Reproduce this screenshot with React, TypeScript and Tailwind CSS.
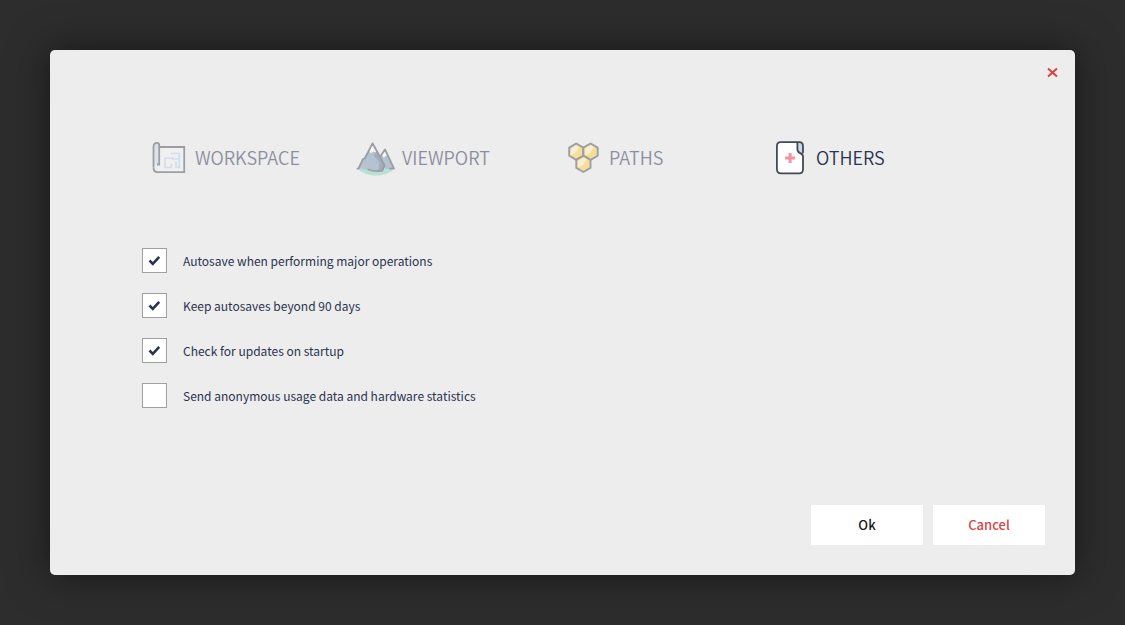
import { useState } from 'react';
import type { ReactNode } from 'react';

function BlueprintIcon() {
  return (
    <svg viewBox="0 0 42 42" className="size-[42px]" fill="none" aria-hidden="true">
      <path d="M10 10h26v24.500H10z" fill="#f4f4f4" />
      <path d="M5.500 30V10c0-2.600 1.300-4.200 3.300-4.200 1.500 0 2.400.8 2.400 2.400V27H8.500c-2 0-3 1.500-3 3z" fill="#c9d9e8" />
      <path
        d="M5.500 30V10c0-2.600 1.300-4.200 3.300-4.200 1.500 0 2.400.8 2.400 2.400V27.500H9M11.500 10h24.700v25.200H9.500c-2.700 0-4-1.800-4-5"
        stroke="#4b545e"
        strokeWidth="1.800"
      />
      <path
        d="M17 20.500V30.500h6.500v-4M16.500 21h8.500v2M22.500 16.500h8.800v5.500H26.500M31.300 22v8.500H28v-6"
        stroke="#b9d0e4"
        strokeWidth="1.700"
      />
    </svg>
  );
}

function MountainIcon() {
  return (
    <svg viewBox="0 0 42 42" className="size-[42px]" fill="none" aria-hidden="true">
      <path d="M3 32h36c-4 4-11 6.500-18 6.500S7 36 3 32z" fill="#82d7b5" />
      <path d="M25 21l5.500-8.500L39.500 32H30z" fill="#7d98b8" />
      <path d="M17.500 6.500L30 26l-2.500 8-14-1.500-11-1 6-10z" fill="#7d98b8" />
      <path d="M18.500 18l6 8-1 7.500 4.500.500 2.500-5.500L22 13z" fill="#5a7290" />
      <path d="M17.500 6.500L14 14l2 2.500 2-2 2.500 1L22 13z" fill="#fff" />
      <path d="M30 13l-3 5.500 2 2 2-2 2.500 1z" fill="#fff" />
      <path
        d="M2.500 31.700h1L8 22l1.800-.5L17.500 6.300 25 20l4.500 8.500-2.300 5c-4.200 1-10 .8-14-1M25 20l5-7.500 9 19.200h-4"
        stroke="#4b545e"
        strokeWidth="1.800"
        strokeLinejoin="round"
        strokeLinecap="round"
      />
    </svg>
  );
}

function HoneycombIcon() {
  return (
    <svg viewBox="-0.7 0 42 42" className="size-[42px]" fill="none" aria-hidden="true">
      <g fill="#ffd046" stroke="#4b545e" strokeWidth="1.900" strokeLinejoin="round">
        <path d="M13.500 6.500l7.100 4.100v8.200l-7.100 4.100-7-4.100v-8.200z" />
        <path d="M27.900 6.500l7.100 4.100v8.200l-7.100 4.100-7.300-4.100v-8.200z" />
        <path d="M20.700 18.800l7.100 4.100v8L20.700 35l-7.100-4.100v-8z" />
      </g>
      <g fill="#fff" fillOpacity=".65">
        <path d="M8 11.500l5.500-3.200 3 1.700-3 5.500-5.500 3z" />
        <path d="M22.400 11.500l5.500-3.200 3 1.700-3 5.500-5.500 3z" />
        <path d="M15.200 23.800l5.500-3.200 3 1.700-3 5.500-5.500 3z" />
      </g>
    </svg>
  );
}

function MedicalFileIcon() {
  return (
    <svg viewBox="-0.2 0 42 42" className="size-[42px]" fill="none" aria-hidden="true">
      <path
        d="M11.500 5.200h18.700c2.600 0 3.600 1.600 3.600 4v22.800c0 3-1 4.400-3.600 4.400H12c-3 0-4.300-1.300-4.300-4.400V9.400c0-2.800 1-4.200 3.800-4.200z"
        fill="#fff"
      />
      <path d="M28.200 5.400h2c2.500 0 3.600 1.600 3.600 4v7.600l-3.600-1.500c-1.600-.9-2-1.900-2-4z" fill="#c9d9e8" />
      <path
        d="M33.800 15.500V9.400c0-2.600-1-4.200-3.600-4.200H11.500c-2.800 0-3.800 1.400-3.800 4.200V32c0 3 1.200 4.400 4.300 4.400h18.200c2.600 0 3.600-1.400 3.600-4.400V19.700c0-1.900-.7-2.600-2.800-3.500-2-.9-2.800-2-2.800-4.200V5.400"
        stroke="#414a56"
        strokeWidth="1.800"
        strokeLinecap="round"
      />
      <path d="M19.400 16h3v3.500H26v3h-3.600v3.600h-3v-3.600h-3.500v-3h3.500z" fill="#f094a0" />
    </svg>
  );
}

const tabs: { name: string; icon: ReactNode }[] = [
  { name: 'WORKSPACE', icon: <BlueprintIcon /> },
  { name: 'VIEWPORT', icon: <MountainIcon /> },
  { name: 'PATHS', icon: <HoneycombIcon /> },
  { name: 'OTHERS', icon: <MedicalFileIcon /> },
];

const options = [
  { id: 'autosave', label: 'Autosave when performing major operations', checked: true },
  { id: 'keep', label: 'Keep autosaves beyond 90 days', checked: true },
  { id: 'updates', label: 'Check for updates on startup', checked: true },
  { id: 'usage', label: 'Send anonymous usage data and hardware statistics', checked: false },
];

function Option({ id, label, checked }: { id: string; label: string; checked: boolean }) {
  return (
    <div className="flex items-center gap-4">
      <span className="grid size-[25px] shrink-0 place-items-center">
        <input
          id={id}
          type="checkbox"
          defaultChecked={checked}
          className="peer col-start-1 row-start-1 size-[25px] appearance-none border border-[#a0a0a0] bg-white"
        />
        <svg
          viewBox="0 0 13 13"
          className="pointer-events-none invisible col-start-1 row-start-1 size-[13px] peer-checked:visible"
          fill="none"
          aria-hidden="true"
        >
          <path d="M1.500 6.500l3.300 3.300 6.400-6.900" stroke="#2c3350" strokeWidth="2.600" />
        </svg>
      </span>
      <label htmlFor={id} className="text-[12px] leading-5">
        {label}
      </label>
    </div>
  );
}

export default function App() {
  const [active, setActive] = useState('OTHERS');
  return (
    <div className="flex min-h-screen bg-[#2d2d2d] p-[50px] font-['Noto_Sans_CJK_SC',sans-serif] text-[#2c3350]">
      <main
        role="dialog"
        aria-label="Preferences"
        className="flex flex-1 flex-col rounded-[5px] bg-[#ededed] shadow-[0_0_40px_rgba(0,0,0,0.5)]"
      >
        <div className="flex justify-end px-[15px] pt-[15px]">
          <button type="button" aria-label="Close" className="grid size-[15px] place-items-center">
            <svg viewBox="0 0 11 11" className="size-[11px]" fill="none" aria-hidden="true">
              <path d="M1 1.500l9 8M10 1.500l-9 8" stroke="#d84444" strokeWidth="2" />
            </svg>
          </button>
        </div>
        <nav role="tablist" className="mt-[57px] grid grid-cols-4 pr-[99px] pl-[98px]">
          {tabs.map((tab) => (
            <button
              key={tab.name}
              type="button"
              role="tab"
              aria-selected={active === tab.name}
              onClick={() => setActive(tab.name)}
              className="flex items-center gap-[5px] text-left text-[18px] leading-7 font-[350] opacity-50 aria-selected:opacity-100"
            >
              {tab.icon}
              <span className="pb-0.5">{tab.name}</span>
            </button>
          ))}
        </nav>
        <section className="mt-[69px] flex flex-col gap-5 px-[92px]">
          {options.map((option) => (
            <Option key={option.id} {...option} />
          ))}
        </section>
        <footer className="mt-auto flex justify-end gap-2.5 p-[30px] pt-10 text-[13px] font-medium">
          <button type="button" className="h-10 w-28 bg-white text-[#16181d]">
            Ok
          </button>
          <button type="button" className="h-10 w-28 bg-white text-[#d84444]">
            Cancel
          </button>
        </footer>
      </main>
    </div>
  );
}
